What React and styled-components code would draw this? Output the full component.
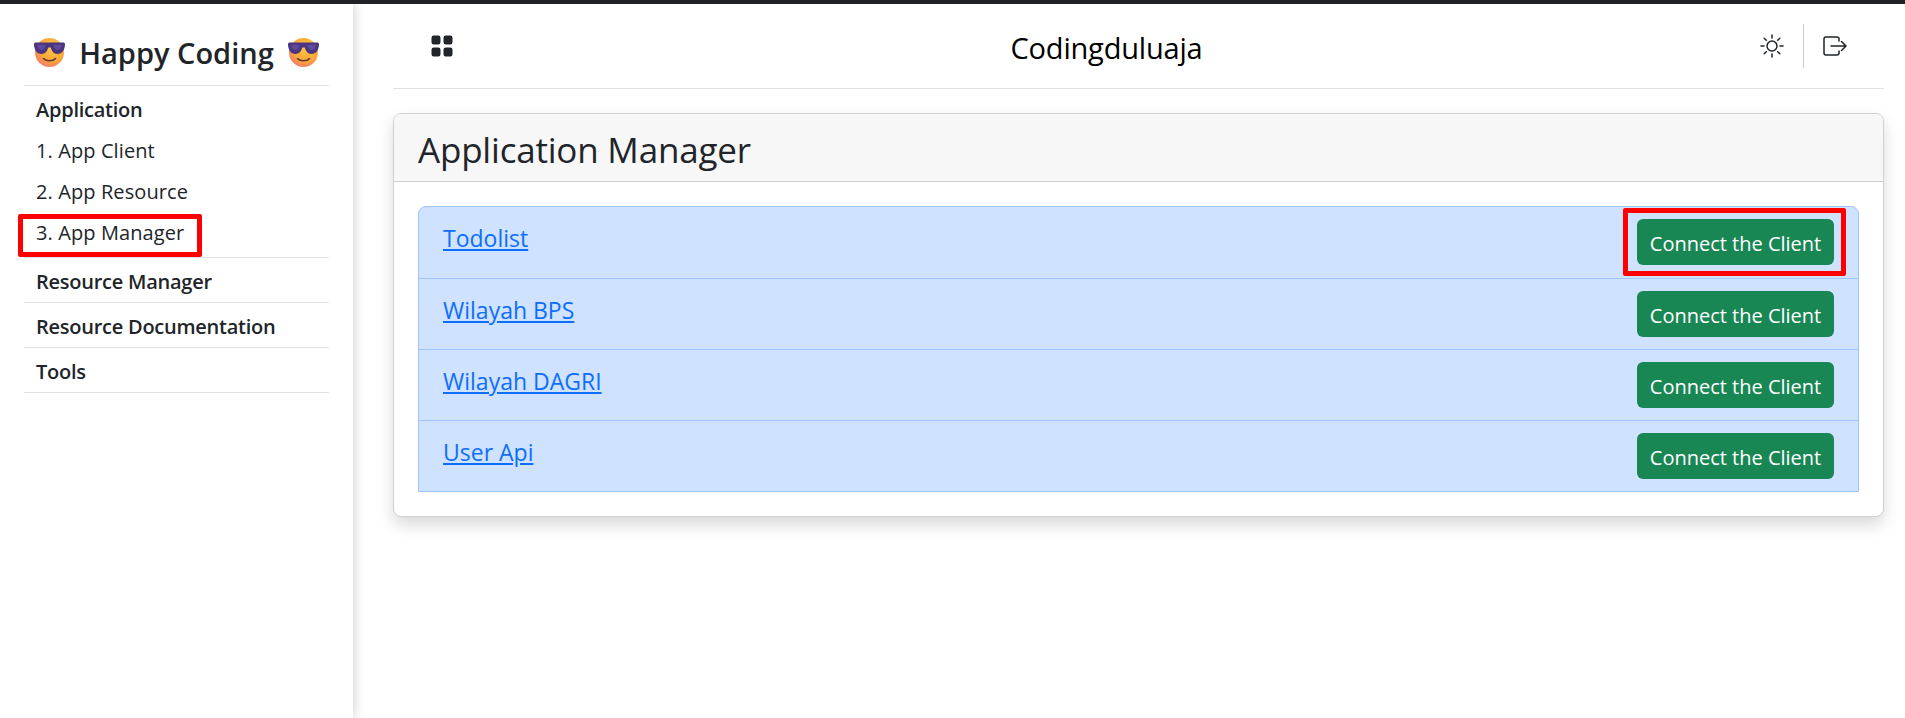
import React from 'react'
import styled, { createGlobalStyle } from 'styled-components'

const GlobalStyle = createGlobalStyle`
	html, body {
		margin: 0;
		padding: 0;
		background: #fff;
	}
	body {
		font-family: 'Open Sans', 'Noto Sans', sans-serif;
		color: #212529;
	}
	* {
		box-sizing: border-box;
	}
`

const Page = styled.div`
	display: flex;
	flex-direction: column;
	height: 718px;
	overflow: hidden;
	border-top: 4px solid #202124;
`

const Body = styled.div`
	display: flex;
	flex: 1;
	min-height: 0;
`

const Sidebar = styled.aside`
	width: 353px;
	flex-shrink: 0;
	padding: 0 24px;
	background: #fff;
	box-shadow: 0 0 12px rgba(0, 0, 0, 0.22);
`

const Brand = styled.div`
	display: flex;
	align-items: center;
	justify-content: center;
	gap: 13px;
	height: 82px;
	padding-top: 15px;
	border-bottom: 1px solid #dee2e6;
	font-size: 29px;
	font-weight: 600;
`

const Section = styled.div`
	padding: 9px 0 ${(p) => (p.$open ? '4px' : '7px')};
	border-bottom: 1px solid #dee2e6;
`

const SectionTitle = styled.div`
	padding-left: 12px;
	height: 28px;
	line-height: 30px;
	font-size: 20px;
	font-weight: 600;
	letter-spacing: -0.25px;
`

const NavList = styled.div`
	padding-top: 7px;
`

const NavItem = styled.div`
	position: relative;
	height: 41px;
	padding-left: 12px;
	line-height: 42px;
	font-size: 20px;
	letter-spacing: 0.1px;
`

const Main = styled.main`
	flex: 1;
	min-width: 0;
	padding: 0 21px 0 40px;
`

const Topbar = styled.header`
	display: flex;
	align-items: center;
	height: 85px;
	padding: 0 37px 0 37px;
	border-bottom: 1px solid #dee2e6;
`

const TopbarTitle = styled.div`
	flex: 1;
	padding: 2px 1px 0 0;
	text-align: center;
	color: #000;
	font-size: 29px;
	letter-spacing: -0.2px;
`

const TopbarActions = styled.div`
	display: flex;
	align-items: center;
`

const Divider = styled.div`
	width: 1px;
	height: 44px;
	margin: 0 19px;
	background: #c8cbcf;
`

const Card = styled.section`
	margin-top: 24px;
	border: 1px solid #cfd0d2;
	border-radius: 8px;
	background: #fff;
	box-shadow: 0 8px 16px rgba(0, 0, 0, 0.15);
`

const CardHeader = styled.div`
	height: 68px;
	padding: 5px 24px 0;
	line-height: 62px;
	background: #f7f7f7;
	border-bottom: 1px solid #cfd0d2;
	border-radius: 7px 7px 0 0;
	font-size: 35px;
	letter-spacing: -0.2px;
`

const CardBody = styled.div`
	padding: 24px;
`

const List = styled.ul`
	list-style: none;
	margin: 0;
	padding: 0;
	border: 1px solid #9ec5fe;
	border-radius: 8px 8px 0 0;
	background: #cfe2ff;
`

const Row = styled.li`
	display: flex;
	justify-content: space-between;
	align-items: flex-start;
	height: 71px;
	padding: 12px 24px;
	border-top: ${(p) => (p.$first ? 'none' : '1px solid #9ec5fe')};
`

const RowLink = styled.a`
	margin-top: 4px;
	color: #0d6efd;
	font-size: 23px;
	line-height: 30px;
	text-decoration: underline;
`

const ButtonWrap = styled.div`
	position: relative;
`

const Button = styled.button`
	display: block;
	width: 197px;
	height: 46px;
	padding: 2px 0 0;
	border: none;
	border-radius: 6px;
	background: #198754;
	color: #fff;
	font-family: inherit;
	font-size: 20px;
`

// red annotation boxes drawn over the screenshot
const Highlight = styled.span`
	position: absolute;
	top: ${(p) => p.$top}px;
	left: ${(p) => p.$left}px;
	width: ${(p) => p.$width}px;
	height: ${(p) => p.$height}px;
	border: 5px solid #ff0000;
	border-radius: 2px;
	pointer-events: none;
`

const Icon = styled.svg`
	display: block;
	flex-shrink: 0;
`

const CoolFace = () => (
	<Icon width="33" height="31" viewBox="0 0 33 31">
		<defs>
			<radialGradient id="face" cx="0.6" cy="0.35" r="0.7">
				<stop offset="0" stopColor="#ffc83d" />
				<stop offset="0.65" stopColor="#fba53a" />
				<stop offset="1" stopColor="#f4786e" />
			</radialGradient>
		</defs>
		<circle cx="16.5" cy="15.500" r="14.5" fill="url(#face)" />
		<path d="M1 7 C1 6 2 5.500 3 5.500 H30 C31 5.500 32 6 32 7 C32 13 29 17 24.500 17 C20.500 17 18.500 13.500 17.800 10.500 H15.200 C14.500 13.500 12.500 17 8.500 17 C4 17 1 13 1 7 Z" fill="#4b3480" />
		<path d="M20.500 8 C23 7.500 26 7.500 29 8 C28.500 11 26.500 13 24 13 C22 13 21 10.500 20.500 8 Z" fill="#5d4a98" />
		<path d="M4 8 C7 7.500 10 7.500 12.500 8 C12 10.500 11 13 9 13 C6.500 13 4.500 11 4 8 Z" fill="#5d4a98" />
		<path d="M10.500 21.500 C13 24.500 20 24.500 22.500 21.500" fill="none" stroke="#5c3a2e" strokeWidth="1.6" strokeLinecap="round" />
	</Icon>
)

const GridIcon = () => (
	<Icon width="24" height="24" viewBox="0 0 16 16" fill="#212529">
		<path d="M1 2.500A1.500 1.500 0 0 1 2.500 1h3A1.500 1.500 0 0 1 7 2.500v3A1.500 1.500 0 0 1 5.500 7h-3A1.500 1.500 0 0 1 1 5.500v-3zm8 0A1.500 1.500 0 0 1 10.500 1h3A1.500 1.500 0 0 1 15 2.500v3A1.500 1.500 0 0 1 13.500 7h-3A1.500 1.500 0 0 1 9 5.500v-3zm-8 8A1.500 1.500 0 0 1 2.500 9h3A1.500 1.500 0 0 1 7 10.500v3A1.500 1.500 0 0 1 5.500 15h-3A1.500 1.500 0 0 1 1 13.500v-3zm8 0A1.500 1.500 0 0 1 10.500 9h3a1.500 1.500 0 0 1 1.500 1.500v3a1.500 1.500 0 0 1-1.500 1.500h-3A1.500 1.500 0 0 1 9 13.500v-3z" />
	</Icon>
)

const SunIcon = () => (
	<Icon width="24" height="24" viewBox="0 0 24 24" fill="none" stroke="#212529" strokeWidth="1.5" strokeLinecap="round">
		<circle cx="12" cy="12" r="5" />
		<path d="M12 1v3M12 20v3M1 12h3M20 12h3M4.200 4.200l2.100 2.100M17.700 17.700l2.100 2.100M4.200 19.800l2.100-2.100M17.700 6.300l2.100-2.100" />
	</Icon>
)

const LogoutIcon = () => (
	<Icon width="24" height="24" viewBox="0 0 24 24" fill="none" stroke="#212529" strokeWidth="1.5" strokeLinecap="round" strokeLinejoin="round">
		<path d="M16 7V5A2 2 0 0 0 14 3H3A2 2 0 0 0 1 5v14a2 2 0 0 0 2 2h11a2 2 0 0 0 2-2v-2" />
		<path d="M8 12h15M18.500 7.500L23 12l-4.500 4.500" />
	</Icon>
)

const apps = ['Todolist', 'Wilayah BPS', 'Wilayah DAGRI', 'User Api']

const App = () => (
	<Page>
		<GlobalStyle />
		<Body>
			<Sidebar>
				<Brand>
					<CoolFace />
					Happy Coding
					<CoolFace />
				</Brand>
				<Section $open>
					<SectionTitle>Application</SectionTitle>
					<NavList>
						<NavItem>1. App Client</NavItem>
						<NavItem>2. App Resource</NavItem>
						<NavItem>
							3. App Manager
							<Highlight $top={2} $left={-6} $width={184} $height={43} />
						</NavItem>
					</NavList>
				</Section>
				<Section>
					<SectionTitle>Resource Manager</SectionTitle>
				</Section>
				<Section>
					<SectionTitle>Resource Documentation</SectionTitle>
				</Section>
				<Section>
					<SectionTitle>Tools</SectionTitle>
				</Section>
			</Sidebar>
			<Main>
				<Topbar>
					<GridIcon />
					<TopbarTitle>Codingduluaja</TopbarTitle>
					<TopbarActions>
						<SunIcon />
						<Divider />
						<LogoutIcon />
					</TopbarActions>
				</Topbar>
				<Card>
					<CardHeader>Application Manager</CardHeader>
					<CardBody>
						<List>
							{apps.map((name, i) => (
								<Row key={name} $first={i === 0}>
									<RowLink href="#">{name}</RowLink>
									<ButtonWrap>
										<Button>Connect the Client</Button>
										{i === 0 && <Highlight $top={-11} $left={-14} $width={223} $height={68} />}
									</ButtonWrap>
								</Row>
							))}
						</List>
					</CardBody>
				</Card>
			</Main>
		</Body>
	</Page>
)

export default App
